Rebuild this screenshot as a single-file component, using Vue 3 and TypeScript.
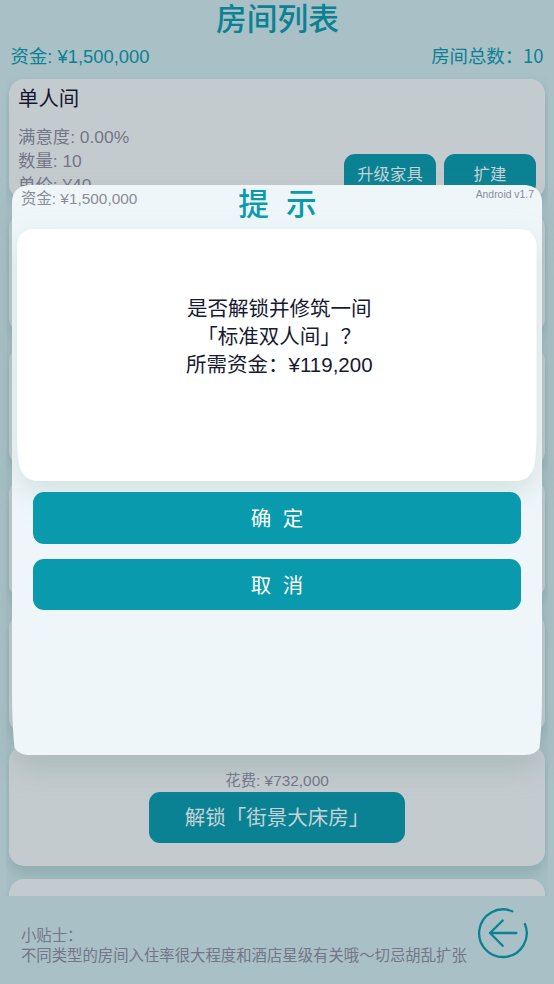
<script setup lang="ts">
import { ref } from 'vue'

interface Room {
  name: string
  details: string[]
}

const room: Room = {
  name: '单人间',
  details: ['满意度: 0.00%', '数量: 10', '单价: ¥40'],
}
const funds = ref('¥1,500,000')
const total = ref(10)
const emptyCards = [1, 2, 3, 4]
const message = ['是否解锁并修筑一间', '「标准双人间」？', '所需资金：¥119,200']
</script>

<template>
  <div class="page">
    <header class="header">
      <h1 class="title">房间列表</h1>
      <div class="stats">
        <span>资金: {{ funds }}</span>
        <span class="total">房间总数：{{ total }}</span>
      </div>
    </header>

    <main class="list">
      <section class="card room">
        <div class="info">
          <h2 class="name">{{ room.name }}</h2>
          <p v-for="line in room.details" :key="line" class="detail">{{ line }}</p>
        </div>
        <div class="actions">
          <button class="btn small">升级家具</button>
          <button class="btn small">扩建</button>
        </div>
      </section>
      <section v-for="n in emptyCards" :key="n" class="card"></section>
      <section class="card locked">
        <p class="cost">花费: ¥732,000</p>
        <button class="btn unlock">解锁「街景大床房」</button>
      </section>
      <section class="card"></section>
    </main>

    <footer class="footer">
      <div class="tips">
        <p>小贴士：</p>
        <p>不同类型的房间入住率很大程度和酒店星级有关哦～切忌胡乱扩张</p>
      </div>
      <svg class="back" viewBox="0 0 52 52">
        <path d="M35.3 4.3A23.8 23.8 0 1 0 47.9 17M13 26H39.3M25.7 13.5L13 26L25.7 38.7" />
      </svg>
    </footer>

    <div class="dialog">
      <svg class="shape dialog-shape" viewBox="0 0 530 570" preserveAspectRatio="none">
        <path d="M0 16Q1 2 16 0H514Q529 2 530 16V505Q530 540 527.5 563Q523 570 513 570H15Q7 569 2.5 563Q0 540 0 505Z" />
      </svg>
      <div class="dialog-head">
        <span class="dialog-funds">资金: {{ funds }}</span>
        <h2 class="dialog-title">提&nbsp; 示</h2>
        <span class="version">Android v1.7</span>
      </div>
      <div class="panel">
        <svg class="shape panel-shape" viewBox="0 0 520 252" preserveAspectRatio="none">
          <path d="M0 15Q2 1 16 0H504Q518 1 520 15V205Q520 225 517.5 238Q514 250 502 252H18Q6 250 2.5 238Q0 225 0 205Z" />
        </svg>
        <p v-for="line in message" :key="line" class="message">{{ line }}</p>
      </div>
      <div class="choices">
        <button class="btn choice">确&nbsp; 定</button>
        <button class="btn choice">取&nbsp; 消</button>
      </div>
    </div>
  </div>
</template>

<style scoped>
.page {
  position: relative;
  width: 554px;
  height: 984px;
  overflow: hidden;
  background: #a8c0c6;
  font-family: "Liberation Sans", "Noto Sans CJK SC", sans-serif;
  color: #737687;
}
h1,
h2,
p {
  margin: 0;
  font-weight: 400;
}
.header {
  height: 76px;
  color: #0b8294;
}
.title {
  height: 40px;
  padding-left: 1px;
  line-height: 40px;
  font-size: 30.7px;
  font-weight: 500;
  text-align: center;
}
.stats {
  display: flex;
  justify-content: space-between;
  padding: 0 10.5px;
  font-size: 18.4px;
  line-height: 34px;
}
.total {
  font-family: "Noto Sans CJK SC", sans-serif;
  font-size: 18.4px;
  line-height: 31px;
}
.list {
  box-sizing: border-box;
  height: 820px;
  margin: 0 6px;
  padding: 3.4px 3px 0;
  overflow: hidden;
  display: flex;
  flex-direction: column;
  gap: 13.3px;
}
.card {
  box-sizing: border-box;
  flex: 0 0 120px;
  border-radius: 15px;
  background: #c4cbcf;
  box-shadow: 0 8px 14px rgba(105, 143, 145, 0.4);
}
.room {
  display: flex;
  justify-content: space-between;
  padding: 0 9px;
}
.name {
  height: 45.6px;
  font-size: 20.4px;
  line-height: 40px;
  color: #14182f;
}
.detail {
  font-size: 17.4px;
  line-height: 24.2px;
}
.actions {
  display: flex;
  gap: 8px;
  padding-top: 74.6px;
}
.btn {
  display: block;
  margin: 0;
  padding: 0 0 3px;
  border: 0;
  border-radius: 11px;
  background: #0b8294;
  color: #c5d2d6;
  font-family: inherit;
}
.small {
  width: 92px;
  height: 41px;
  font-size: 16.4px;
}
.locked {
  display: flex;
  flex-direction: column;
  align-items: center;
  padding-top: 22.5px;
}
.cost {
  height: 24px;
  font-size: 15.4px;
  line-height: 25px;
}
.unlock {
  width: 256px;
  height: 51px;
  font-size: 20.5px;
}
.footer {
  display: flex;
  justify-content: space-between;
  padding: 11px 25px 0 21px;
}
.tips {
  padding-top: 19px;
  font-size: 15.38px;
  line-height: 20px;
  white-space: nowrap;
}
.back {
  width: 52px;
  height: 52px;
  fill: none;
  stroke: #0b8294;
  stroke-width: 2.3;
  stroke-linecap: round;
  stroke-linejoin: round;
}
.dialog {
  position: absolute;
  left: 12px;
  top: 185.4px;
  width: 530px;
  height: 570px;
}
.shape {
  position: absolute;
  inset: 0;
  z-index: -1;
  width: 100%;
  height: 100%;
  overflow: visible;
}
.dialog,
.panel {
  isolation: isolate;
}
.dialog-shape {
  fill: #eef6f9;
  filter: drop-shadow(0 14px 14px rgba(125, 151, 148, 0.32));
}
.panel-shape {
  fill: #fff;
  filter: drop-shadow(0 12px 14px rgba(160, 185, 178, 0.32));
}
.dialog-head {
  display: grid;
  grid-template-columns: 1fr auto 1fr;
  height: 43.6px;
  padding: 0 8px 0 9px;
}
.dialog-funds {
  font-size: 15.4px;
  line-height: 27px;
  color: #898d99;
}
.dialog-title {
  font-size: 30.7px;
  font-weight: 500;
  line-height: 40px;
  color: #099bad;
}
.version {
  font-size: 10.4px;
  line-height: 19px;
  text-align: right;
  color: #898d99;
}
.panel {
  position: relative;
  box-sizing: border-box;
  width: 519.5px;
  height: 252px;
  margin: 0 auto;
  padding: 66px 0 0 4.6px;
  text-align: center;
}
.message {
  font-size: 20.5px;
  line-height: 28px;
  color: #161a31;
}
.choices {
  position: relative;
  display: grid;
  gap: 15.3px;
  padding: 11.4px 21.2px 0;
}
.choice {
  height: 51.3px;
  padding-bottom: 2px;
  background: #099bad;
  color: #fff;
  font-size: 20.5px;
}
</style>
